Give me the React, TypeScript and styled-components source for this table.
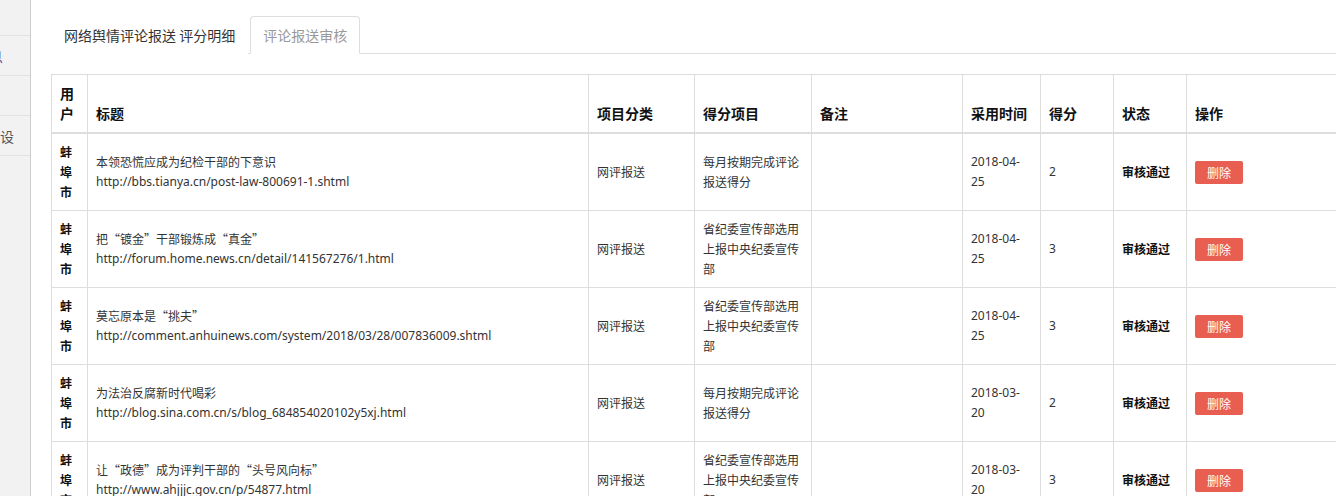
import React from "react";
import styled, { createGlobalStyle } from "styled-components";

const Global = createGlobalStyle`
  html, body { margin: 0; padding: 0; overflow: hidden; background: #fff; }
  body { font-family: "Noto Sans", "Noto Sans CJK SC", sans-serif; color: #333; }
`;

const Shell = styled.div`
  display: flex;
  width: 100vw;
  height: 100vh;
  overflow: hidden;
`;

const Sidebar = styled.nav`
  flex: 0 0 30px;
  background: #f2f2f2;
  border-right: 1px solid #cdcdcd;
  overflow: hidden;
`;

const MenuItem = styled.div<{ $h: number; $peek: number; $color?: string }>`
  height: ${(p) => p.$h - 1}px;
  border-bottom: 1px solid #e2e2e2;
  display: flex;
  align-items: center;
  justify-content: flex-end;
  padding-right: ${(p) => 30 - p.$peek}px;
  white-space: nowrap;
  font-family: "Noto Sans CJK SC", sans-serif;
  font-size: 14px;
  color: ${(p) => p.$color || "#555"};
  overflow: hidden;
`;

const Main = styled.main`
  flex: 1;
  min-width: 0;
  padding: 16px 0 0 20px;
  overflow: hidden;
`;

const Tabs = styled.ul`
  display: flex;
  list-style: none;
  margin: 0 0 20px 0;
  padding: 0;
  border-bottom: 1px solid #ddd;
`;

const Tab = styled.li<{ $active?: boolean }>`
  margin: 0 2px -1px 0;
  padding: 10px 12px;
  font-family: "Noto Sans CJK SC", sans-serif;
  font-size: 14px;
  line-height: 16px;
  border: 1px solid ${(p) => (p.$active ? "#ddd" : "transparent")};
  border-bottom-color: ${(p) => (p.$active ? "#fff" : "transparent")};
  border-radius: 4px 4px 0 0;
  background: #fff;
  color: ${(p) => (p.$active ? "#999" : "#333")};
  white-space: nowrap;
`;

const Table = styled.table`
  border-collapse: collapse;
  table-layout: fixed;
  width: 1335px;
  border: 1px solid #ddd;
  font-size: 12px;
  line-height: 20px;
`;

const Th = styled.th`
  text-align: left;
  vertical-align: bottom;
  padding: 8px 8px 9px;
  font-family: "Noto Sans CJK SC", sans-serif;
  font-size: 14px;
  line-height: 20px;
  font-weight: bold;
  color: #111;
  border: 1px solid #ddd;
  border-bottom: 2px solid #ddd;
`;

const Td = styled.td<{ $bold?: boolean; $cjk?: boolean }>`
  vertical-align: middle;
  padding: 8px;
  border: 1px solid #ddd;
  font-weight: ${(p) => (p.$bold ? "bold" : "normal")};
  color: ${(p) => (p.$bold ? "#111" : "#333")};
  font-family: ${(p) =>
    p.$cjk ? `"Noto Sans CJK SC", sans-serif` : `"Noto Sans", "Noto Sans CJK SC", sans-serif`};
  word-break: break-all;
`;

const TitleLine = styled.div`
  font-family: "Noto Sans CJK SC", sans-serif;
`;

const UrlLine = styled.div`
  white-space: nowrap;
`;

const DeleteButton = styled.button`
  display: inline-block;
  height: 23px;
  padding: 0 12px;
  border: none;
  border-radius: 2px;
  background: #e85e50;
  color: #fff;
  font-family: "Noto Sans CJK SC", sans-serif;
  font-size: 12px;
  line-height: 23px;
  cursor: pointer;
`;

type Row = {
  title: string;
  url: string;
  item: string;
  date: string;
  score: number;
};

const ITEM_A = "每月按期完成评论报送得分";
const ITEM_B = "省纪委宣传部选用上报中央纪委宣传部";

const rows: Row[] = [
  { title: "本领恐慌应成为纪检干部的下意识", url: "http://bbs.tianya.cn/post-law-800691-1.shtml", item: ITEM_A, date: "2018-04-25", score: 2 },
  { title: "把“镀金”干部锻炼成“真金”", url: "http://forum.home.news.cn/detail/141567276/1.html", item: ITEM_B, date: "2018-04-25", score: 3 },
  { title: "莫忘原本是“挑夫”", url: "http://comment.anhuinews.com/system/2018/03/28/007836009.shtml", item: ITEM_B, date: "2018-04-25", score: 3 },
  { title: "为法治反腐新时代喝彩", url: "http://blog.sina.com.cn/s/blog_684854020102y5xj.html", item: ITEM_A, date: "2018-03-20", score: 2 },
  { title: "让“政德”成为评判干部的“头号风向标”", url: "http://www.ahjjjc.gov.cn/p/54877.html", item: ITEM_B, date: "2018-03-20", score: 3 },
];

const widths = [36, 501, 106, 117, 151, 78, 73, 73, 200];
const headers = ["用户", "标题", "项目分类", "得分项目", "备注", "采用时间", "得分", "状态", "操作"];

function DateText({ value }: { value: string }) {
  const cut = value.lastIndexOf("-") + 1;
  return (
    <>
      {value.slice(0, cut)}
      <br />
      {value.slice(cut)}
    </>
  );
}

export default function App() {
  return (
    <Shell lang="zh-CN">
      <Global />
      <Sidebar>
        <MenuItem $h={36} $peek={0}></MenuItem>
        <MenuItem $h={40} $peek={3} $color="#5a4a9c">舆情信息</MenuItem>
        <MenuItem $h={40} $peek={0}></MenuItem>
        <MenuItem $h={40} $peek={14}>队伍建设</MenuItem>
      </Sidebar>
      <Main>
        <Tabs>
          <Tab>网络舆情评论报送 评分明细</Tab>
          <Tab $active>评论报送审核</Tab>
        </Tabs>
        <Table>
          <colgroup>
            {widths.map((w, i) => (
              <col key={i} style={{ width: w }} />
            ))}
          </colgroup>
          <thead>
            <tr>
              {headers.map((h) => (
                <Th key={h}>{h}</Th>
              ))}
            </tr>
          </thead>
          <tbody>
            {rows.map((r, i) => (
              <tr key={i}>
                <Td $bold $cjk>蚌埠市</Td>
                <Td>
                  <TitleLine>{r.title}</TitleLine>
                  <UrlLine>{r.url}</UrlLine>
                </Td>
                <Td $cjk>网评报送</Td>
                <Td $cjk>{r.item}</Td>
                <Td></Td>
                <Td>
                  <DateText value={r.date} />
                </Td>
                <Td>{r.score}</Td>
                <Td $bold $cjk>审核通过</Td>
                <Td>
                  <DeleteButton>删除</DeleteButton>
                </Td>
              </tr>
            ))}
          </tbody>
        </Table>
      </Main>
    </Shell>
  );
}
